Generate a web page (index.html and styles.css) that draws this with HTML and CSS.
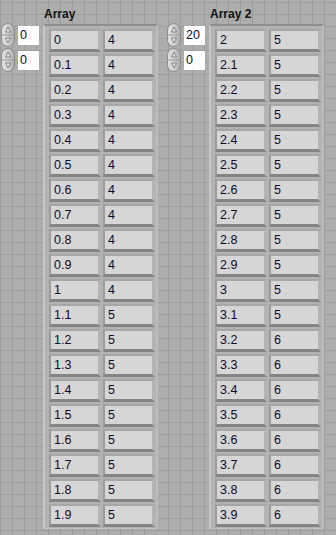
FILE: index.html
```html
<!DOCTYPE html>
<html>
<head>
<meta charset="utf-8">
<link rel="stylesheet" href="styles.css">
</head>
<body>
<svg class="defs" width="0" height="0">
  <defs>
    <linearGradient id="sg" x1="0" y1="0" x2="1" y2="0">
      <stop offset="0" stop-color="#e4e4e4"/>
      <stop offset="0.5" stop-color="#d0d0d0"/>
      <stop offset="1" stop-color="#a8a8a8"/>
    </linearGradient>
  </defs>
</svg>
<div class="panel">
  <div class="group">
    <div class="label">Array</div>
    <div class="body">
      <div class="indices">
        <div class="idx"><span class="spin"><svg width="14" height="24" viewBox="0 0 14 24"><rect x="0.5" y="0.5" width="13" height="23" rx="6.5" fill="url(#sg)" stroke="#8c8c8c"/><line x1="1" y1="12" x2="13" y2="12" stroke="#9a9a9a"/><path d="M7 4 L9.5 9 L4.5 9 Z" fill="#e6e6e6" stroke="#707070" stroke-width="0.8"/><path d="M7 20 L9.5 15 L4.5 15 Z" fill="#e6e6e6" stroke="#707070" stroke-width="0.8"/></svg></span><span class="box">0</span></div>
        <div class="idx"><span class="spin"><svg width="14" height="24" viewBox="0 0 14 24"><rect x="0.5" y="0.5" width="13" height="23" rx="6.5" fill="url(#sg)" stroke="#8c8c8c"/><line x1="1" y1="12" x2="13" y2="12" stroke="#9a9a9a"/><path d="M7 4 L9.5 9 L4.5 9 Z" fill="#e6e6e6" stroke="#707070" stroke-width="0.8"/><path d="M7 20 L9.5 15 L4.5 15 Z" fill="#e6e6e6" stroke="#707070" stroke-width="0.8"/></svg></span><span class="box">0</span></div>
      </div>
      <div class="frame">
        <div class="cell">0</div><div class="cell">4</div>
        <div class="cell">0.1</div><div class="cell">4</div>
        <div class="cell">0.2</div><div class="cell">4</div>
        <div class="cell">0.3</div><div class="cell">4</div>
        <div class="cell">0.4</div><div class="cell">4</div>
        <div class="cell">0.5</div><div class="cell">4</div>
        <div class="cell">0.6</div><div class="cell">4</div>
        <div class="cell">0.7</div><div class="cell">4</div>
        <div class="cell">0.8</div><div class="cell">4</div>
        <div class="cell">0.9</div><div class="cell">4</div>
        <div class="cell">1</div><div class="cell">4</div>
        <div class="cell">1.1</div><div class="cell">5</div>
        <div class="cell">1.2</div><div class="cell">5</div>
        <div class="cell">1.3</div><div class="cell">5</div>
        <div class="cell">1.4</div><div class="cell">5</div>
        <div class="cell">1.5</div><div class="cell">5</div>
        <div class="cell">1.6</div><div class="cell">5</div>
        <div class="cell">1.7</div><div class="cell">5</div>
        <div class="cell">1.8</div><div class="cell">5</div>
        <div class="cell">1.9</div><div class="cell">5</div>
      </div>
    </div>
  </div>
  <div class="group">
    <div class="label">Array 2</div>
    <div class="body">
      <div class="indices">
        <div class="idx"><span class="spin"><svg width="14" height="24" viewBox="0 0 14 24"><rect x="0.5" y="0.5" width="13" height="23" rx="6.5" fill="url(#sg)" stroke="#8c8c8c"/><line x1="1" y1="12" x2="13" y2="12" stroke="#9a9a9a"/><path d="M7 4 L9.5 9 L4.5 9 Z" fill="#e6e6e6" stroke="#707070" stroke-width="0.8"/><path d="M7 20 L9.5 15 L4.5 15 Z" fill="#e6e6e6" stroke="#707070" stroke-width="0.8"/></svg></span><span class="box">20</span></div>
        <div class="idx"><span class="spin"><svg width="14" height="24" viewBox="0 0 14 24"><rect x="0.5" y="0.5" width="13" height="23" rx="6.5" fill="url(#sg)" stroke="#8c8c8c"/><line x1="1" y1="12" x2="13" y2="12" stroke="#9a9a9a"/><path d="M7 4 L9.5 9 L4.5 9 Z" fill="#e6e6e6" stroke="#707070" stroke-width="0.8"/><path d="M7 20 L9.5 15 L4.5 15 Z" fill="#e6e6e6" stroke="#707070" stroke-width="0.8"/></svg></span><span class="box">0</span></div>
      </div>
      <div class="frame">
        <div class="cell">2</div><div class="cell">5</div>
        <div class="cell">2.1</div><div class="cell">5</div>
        <div class="cell">2.2</div><div class="cell">5</div>
        <div class="cell">2.3</div><div class="cell">5</div>
        <div class="cell">2.4</div><div class="cell">5</div>
        <div class="cell">2.5</div><div class="cell">5</div>
        <div class="cell">2.6</div><div class="cell">5</div>
        <div class="cell">2.7</div><div class="cell">5</div>
        <div class="cell">2.8</div><div class="cell">5</div>
        <div class="cell">2.9</div><div class="cell">5</div>
        <div class="cell">3</div><div class="cell">5</div>
        <div class="cell">3.1</div><div class="cell">5</div>
        <div class="cell">3.2</div><div class="cell">6</div>
        <div class="cell">3.3</div><div class="cell">6</div>
        <div class="cell">3.4</div><div class="cell">6</div>
        <div class="cell">3.5</div><div class="cell">6</div>
        <div class="cell">3.6</div><div class="cell">6</div>
        <div class="cell">3.7</div><div class="cell">6</div>
        <div class="cell">3.8</div><div class="cell">6</div>
        <div class="cell">3.9</div><div class="cell">6</div>
      </div>
    </div>
  </div>
</div>
</body>
</html>
```
FILE: styles.css
```css
html, body {
  margin: 0;
  padding: 0;
}
body {
  width: 336px;
  height: 535px;
  overflow: hidden;
  background-color: #adadad;
  background-image:
    linear-gradient(to right, #9d9d9d 1px, transparent 1px),
    linear-gradient(to bottom, #9d9d9d 1px, transparent 1px);
  background-size: 12px 12px;
  background-position: 0 2px;
  font-family: "Liberation Sans", Arial, sans-serif;
  color: #0c0c2a;
}
.defs {
  position: absolute;
  width: 0;
  height: 0;
}
.panel {
  display: flex;
  gap: 9px;
  padding-left: 1px;
}
.group {
  display: flex;
  flex-direction: column;
}
.label {
  height: 24px;
  padding-left: 43px;
  padding-top: 7px;
  box-sizing: border-box;
  font-weight: bold;
  font-size: 12px;
  line-height: 14px;
  color: #111;
}
.body {
  display: flex;
  gap: 3px;
}
.indices {
  display: flex;
  flex-direction: column;
  gap: 1px;
  width: 39px;
  margin-top: -1px;
}
.idx {
  display: flex;
  align-items: center;
  gap: 3px;
  height: 24px;
}
.spin {
  display: block;
  width: 14px;
  height: 24px;
}
.spin svg {
  display: block;
}
.box {
  display: block;
  width: 21px;
  height: 19px;
  background: #ffffff;
  font-size: 12.5px;
  line-height: 19px;
  padding-left: 2px;
  box-sizing: border-box;
  color: #0c0c2a;
}
.frame {
  display: grid;
  grid-template-columns: 52px 52px;
  grid-auto-rows: 23px;
  column-gap: 2px;
  row-gap: 2px;
  background: #b2b2b2;
  border-style: solid;
  border-width: 2px 2px 1px 2px;
  border-color: #8e8e8e #bcbcbc #c0c0c0 #c6c6c6;
  padding: 3px 3px 1px 4px;
  width: 115px;
  box-sizing: border-box;
}
.cell {
  background: #d6d6d6;
  border-style: solid;
  border-width: 2px 3px 3px 2px;
  border-color: #a6a6a6 #b4b4b4 #848484 #9c9c9c;
  box-sizing: border-box;
  font-size: 12.5px;
  line-height: 18px;
  padding-left: 3px;
  color: #0c0c2a;
}
```
